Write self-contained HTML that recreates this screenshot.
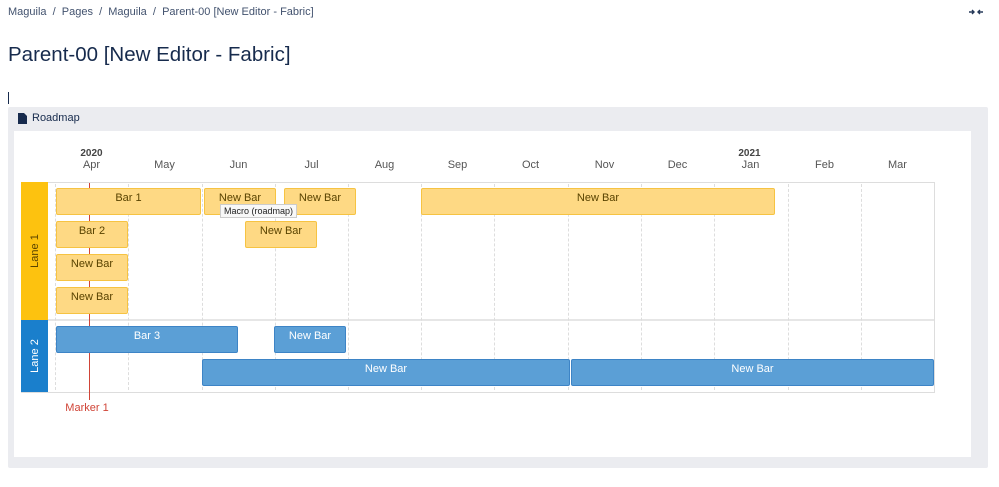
<!DOCTYPE html>
<html><head><style>
body{margin:0;width:999px;height:487px;background:#fff;font-family:"Liberation Sans",sans-serif;position:relative;overflow:hidden}
.a{position:absolute}
.bc{left:8px;top:6px;font-size:11px;color:#42526e}
h1{position:absolute;left:8px;top:43px;margin:0;font-weight:400;font-size:20.5px;color:#172b4d}
.m{font-size:11px;color:#555;text-align:center;width:73px}
.y{font-size:10px;font-weight:bold;color:#444;text-align:center;width:73px}
.dl{width:0;border-left:1px dashed #ddd}
.b{box-sizing:border-box;border-radius:2px;font-size:11px;text-align:center;line-height:18px}
.yb{background:#fed984;border:1px solid #f6c342;color:#594300}
.bb{background:#5b9fd6;border:1px solid #3d84c6;color:#fff}
</style></head><body>
<div class="a bc">Maguila &nbsp;/&nbsp; Pages &nbsp;/&nbsp; Maguila &nbsp;/&nbsp; Parent-00 [New Editor - Fabric]</div>
<svg class="a" style="left:969px;top:9px" width="14" height="6" viewBox="0 0 14 6"><path d="M0 3h5M3 1l2 2-2 2M14 3H9M11 1L9 3l2 2" stroke="#253858" stroke-width="1.4" fill="none"/></svg>
<h1>Parent-00 [New Editor - Fabric]</h1>
<div class="a" style="left:8px;top:92px;width:1px;height:12px;background:#172b4d"></div>
<div class="a" style="left:8px;top:107px;width:980px;height:361px;background:#ebecf0;border-radius:2px"></div>
<svg class="a" style="left:18px;top:113px" width="9" height="11" viewBox="0 0 9 11"><path d="M0 0h6l3 3v8H0z" fill="#172b4d"/></svg>
<div class="a" style="left:32px;top:112px;font-size:11px;color:#172b4d">Roadmap</div>
<div class="a" style="left:14px;top:131px;width:957px;height:326px;background:#fff"></div>
<div class="a y" style="left:55px;top:148px">2020</div>
<div class="a y" style="left:713px;top:148px">2021</div>
<div class="a m" style="left:55px;top:159px">Apr</div>
<div class="a m" style="left:128px;top:159px">May</div>
<div class="a m" style="left:202px;top:159px">Jun</div>
<div class="a m" style="left:275px;top:159px">Jul</div>
<div class="a m" style="left:348px;top:159px">Aug</div>
<div class="a m" style="left:421px;top:159px">Sep</div>
<div class="a m" style="left:494px;top:159px">Oct</div>
<div class="a m" style="left:568px;top:159px">Nov</div>
<div class="a m" style="left:641px;top:159px">Dec</div>
<div class="a m" style="left:714px;top:159px">Jan</div>
<div class="a m" style="left:788px;top:159px">Feb</div>
<div class="a m" style="left:861px;top:159px">Mar</div>
<div class="a" style="left:21px;top:182px;width:912px;height:209px;border:1px solid #ddd"></div>
<div class="a" style="left:48px;top:319px;width:886px;height:2px;background:#e6e6e6"></div>
<div class="a dl" style="left:55px;top:184px;height:206px"></div>
<div class="a dl" style="left:128px;top:184px;height:206px"></div>
<div class="a dl" style="left:202px;top:184px;height:206px"></div>
<div class="a dl" style="left:275px;top:184px;height:206px"></div>
<div class="a dl" style="left:348px;top:184px;height:206px"></div>
<div class="a dl" style="left:421px;top:184px;height:206px"></div>
<div class="a dl" style="left:494px;top:184px;height:206px"></div>
<div class="a dl" style="left:568px;top:184px;height:206px"></div>
<div class="a dl" style="left:641px;top:184px;height:206px"></div>
<div class="a dl" style="left:714px;top:184px;height:206px"></div>
<div class="a dl" style="left:788px;top:184px;height:206px"></div>
<div class="a dl" style="left:861px;top:184px;height:206px"></div>
<div class="a" style="left:21px;top:182px;width:27px;height:138px;background:#fdc20f"></div>
<div class="a" style="left:21px;top:320px;width:27px;height:72px;background:#1a7fcc"></div>
<div class="a" style="left:35px;top:251px;transform:translate(-50%,-50%) rotate(-90deg);font-size:11px;color:#594300;white-space:nowrap">Lane 1</div>
<div class="a" style="left:35px;top:356px;transform:translate(-50%,-50%) rotate(-90deg);font-size:11px;color:#fff;white-space:nowrap">Lane 2</div>
<div class="a" style="left:89px;top:183px;width:1px;height:217px;background:#d04437"></div>
<div class="a" style="left:57px;top:402px;width:60px;text-align:center;font-size:11px;color:#d04437">Marker 1</div>
<div class="a b yb" style="left:56px;top:188px;width:145px;height:27px">Bar 1</div>
<div class="a b yb" style="left:204px;top:188px;width:72px;height:27px">New Bar</div>
<div class="a b yb" style="left:284px;top:188px;width:72px;height:27px">New Bar</div>
<div class="a b yb" style="left:421px;top:188px;width:354px;height:27px">New Bar</div>
<div class="a b yb" style="left:56px;top:221px;width:72px;height:27px">Bar 2</div>
<div class="a b yb" style="left:245px;top:221px;width:72px;height:27px">New Bar</div>
<div class="a b yb" style="left:56px;top:254px;width:72px;height:27px">New Bar</div>
<div class="a b yb" style="left:56px;top:287px;width:72px;height:27px">New Bar</div>
<div class="a b bb" style="left:56px;top:326px;width:182px;height:27px">Bar 3</div>
<div class="a b bb" style="left:274px;top:326px;width:72px;height:27px">New Bar</div>
<div class="a b bb" style="left:202px;top:359px;width:368px;height:27px">New Bar</div>
<div class="a b bb" style="left:571px;top:359px;width:363px;height:27px">New Bar</div>
<div class="a" style="left:220px;top:204px;padding:0 3px;height:12px;line-height:12px;font-size:9px;background:#f8f8f8;border:1px solid #ccc;color:#222">Macro (roadmap)</div>
</body></html>
